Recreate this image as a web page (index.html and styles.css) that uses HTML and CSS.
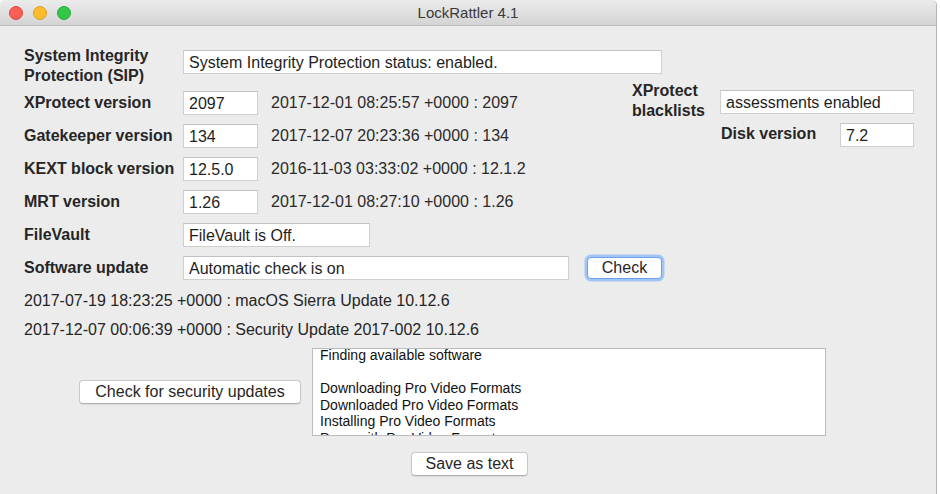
FILE: index.html
```html
<!DOCTYPE html>
<html>
<head>
<meta charset="utf-8">
<title>LockRattler 4.1</title>
<link rel="stylesheet" href="styles.css">
</head>
<body>
<div class="window">
  <div class="titlebar">
    <div class="lights">
      <span class="light red"></span>
      <span class="light yellow"></span>
      <span class="light green"></span>
    </div>
    <div class="title">LockRattler 4.1</div>
  </div>
  <div class="content">
    <div class="row sip">
      <div class="label two">System Integrity<br>Protection (SIP)</div>
      <div class="field w-sip">System Integrity Protection status: enabled.</div>
    </div>
    <div class="versions">
      <div class="vcol">
        <div class="row">
          <div class="label">XProtect version</div>
          <div class="field w-ver">2097</div>
          <div class="info">2017-12-01 08:25:57 +0000 : 2097</div>
        </div>
        <div class="row">
          <div class="label">Gatekeeper version</div>
          <div class="field w-ver">134</div>
          <div class="info">2017-12-07 20:23:36 +0000 : 134</div>
        </div>
        <div class="row">
          <div class="label">KEXT block version</div>
          <div class="field w-ver">12.5.0</div>
          <div class="info">2016-11-03 03:33:02 +0000 : 12.1.2</div>
        </div>
        <div class="row">
          <div class="label">MRT version</div>
          <div class="field w-ver">1.26</div>
          <div class="info">2017-12-01 08:27:10 +0000 : 1.26</div>
        </div>
      </div>
      <div class="side">
        <div class="side-row">
          <div class="label two side-label">XProtect<br>blacklists</div>
          <div class="field w-bl">assessments enabled</div>
        </div>
        <div class="side-row disk">
          <div class="label disk-label">Disk version</div>
          <div class="field w-disk">7.2</div>
        </div>
      </div>
    </div>
    <div class="row">
      <div class="label">FileVault</div>
      <div class="field w-fv">FileVault is Off.</div>
    </div>
    <div class="row">
      <div class="label">Software update</div>
      <div class="field w-su">Automatic check is on</div>
      <button class="btn focus check">Check</button>
    </div>
    <div class="line first">2017-07-19 18:23:25 +0000 : macOS Sierra Update 10.12.6</div>
    <div class="line">2017-12-07 00:06:39 +0000 : Security Update 2017-002 10.12.6</div>
    <div class="bottom">
      <button class="btn secupd">Check for security updates</button>
      <div class="list">
        <div class="list-inner">
          <div>Finding available software</div>
          <div>&nbsp;</div>
          <div>Downloading Pro Video Formats</div>
          <div>Downloaded Pro Video Formats</div>
          <div>Installing Pro Video Formats</div>
          <div>Done with Pro Video Formats</div>
        </div>
      </div>
    </div>
    <div class="save">
      <button class="btn savebtn">Save as text</button>
    </div>
  </div>
</div>
</body>
</html>
```

FILE: styles.css
```css
html, body {
  margin: 0;
  padding: 0;
  background: #ffffff;
}
body {
  font-family: "Liberation Sans", Arial, sans-serif;
  font-size: 16px;
  color: #252525;
}
.window {
  width: 936px;
  height: 494px;
  background: #ececec;
  border-right: 1px solid #b4b4b4;
  border-top-left-radius: 5px;
  border-top-right-radius: 5px;
  overflow: hidden;
}
.titlebar {
  height: 25px;
  background: linear-gradient(#ebebeb, #d4d4d4);
  border-bottom: 1px solid #bdbdbd;
  display: flex;
  align-items: center;
  position: relative;
}
.lights {
  display: flex;
  gap: 10px;
  padding-left: 9px;
}
.light {
  width: 14px;
  height: 14px;
  border-radius: 50%;
  box-sizing: border-box;
}
.red { background: #fc5f57; border: 1px solid #e0443e; }
.yellow { background: #fdbc2e; border: 1px solid #dea123; }
.green { background: #33c748; border: 1px solid #27aa35; }
.title {
  position: absolute;
  left: 0;
  right: 0;
  text-align: center;
  font-size: 15px;
  color: #3a3a3a;
  top: 4px;
}
.content {
  padding: 19px 0 0 24px;
  display: flex;
  flex-direction: column;
}
.row {
  display: flex;
  align-items: center;
  height: 24px;
  margin-bottom: 9px;
}
.row.sip {
  height: 40px;
  align-items: flex-start;
  margin-bottom: 6px;
}
.row.sip .label {
  padding-top: 1px;
}
.row.sip .field {
  margin-top: 5px;
}
.label {
  font-weight: bold;
  width: 159px;
  flex: none;
  color: #262626;
  line-height: 20px;
}
.field {
  box-sizing: border-box;
  height: 24px;
  background: #ffffff;
  border: 1px solid #cfcfcf;
  border-top-color: #c2c2c2;
  padding: 0 5px;
  line-height: 23px;
  white-space: nowrap;
  overflow: hidden;
  flex: none;
  color: #1e1e1e;
}
.w-sip { width: 479px; }
.w-ver { width: 75px; }
.w-fv { width: 187px; }
.w-su { width: 386px; }
.w-bl { width: 194px; }
.w-disk { width: 74px; }
.info {
  margin-left: 13px;
  color: #2a2a2a;
  white-space: nowrap;
}
.versions {
  display: flex;
}
.vcol {
  width: 608px;
  flex: none;
}
.side {
  width: 282px;
  margin-top: -10px;
}
.side-row {
  display: flex;
  align-items: center;
}
.side-label {
  width: 88px;
}
.side-row .field {
  margin-top: 2px;
}
.side-row.disk {
  margin-top: 0;
  padding-left: 89px;
}
.disk-label {
  width: auto;
  flex: 1;
}
.btn {
  font-family: "Liberation Sans", Arial, sans-serif;
  font-size: 16px;
  color: #262626;
  background: #ffffff;
  border: 1px solid #c8c8c8;
  border-bottom-color: #b0b0b0;
  border-radius: 4px;
  box-shadow: 0 1px 1px rgba(0, 0, 0, 0.08);
  padding: 0;
  height: 24px;
  line-height: 22px;
  box-sizing: border-box;
}
.check {
  margin-left: 18px;
  width: 75px;
  height: 22px;
  line-height: 20px;
}
.focus {
  border-color: #6aa0ea;
  box-shadow: 0 0 0 2.5px #a3c5f4;
}
.line {
  height: 20px;
  line-height: 20px;
  margin-bottom: 9px;
  white-space: nowrap;
}
.line.first {
  margin-top: 2px;
}
.bottom {
  display: flex;
  align-items: center;
  margin-top: -1px;
}
.secupd {
  margin-left: 55px;
  width: 222px;
}
.list {
  margin-left: 11px;
  width: 514px;
  height: 88px;
  box-sizing: border-box;
  background: #ffffff;
  border: 1px solid #bcbcbc;
  overflow: hidden;
  font-size: 14px;
  line-height: 16.5px;
  padding: 0 7px;
  color: #111;
}
.list-inner {
  margin-top: -2px;
}
.save {
  display: flex;
  margin-top: 16px;
  padding-left: 387px;
}
.savebtn {
  width: 117px;
}
```
